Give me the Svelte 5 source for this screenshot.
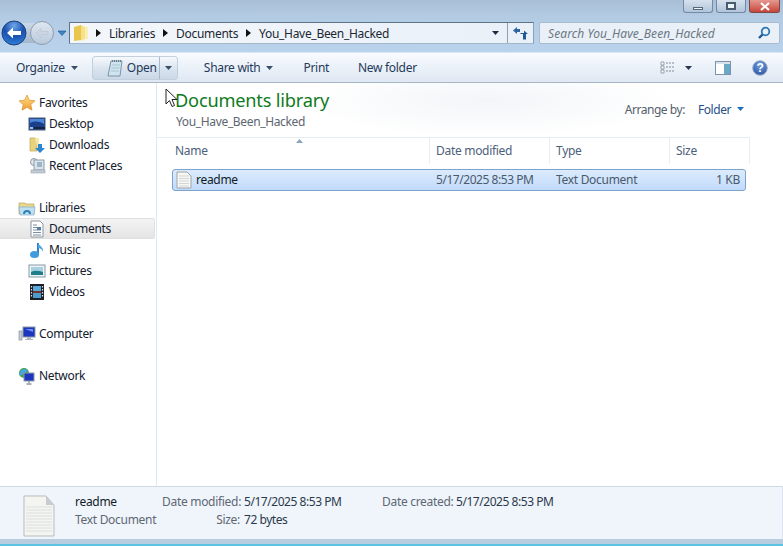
<script>
  const favs = [
    { id: 'desktop', label: 'Desktop' },
    { id: 'downloads', label: 'Downloads' },
    { id: 'recent', label: 'Recent Places' }
  ];
  const libs = [
    { id: 'documents', label: 'Documents', active: true },
    { id: 'music', label: 'Music' },
    { id: 'pictures', label: 'Pictures' },
    { id: 'videos', label: 'Videos' }
  ];
</script>

{#snippet caret(c = '#3a4f66')}
  <svg class="caret" width="7" height="4" viewBox="0 0 7 4"><path d="M0 0h7L3.500 4z" fill={c} /></svg>
{/snippet}

{#snippet sep()}
  <svg class="sep" width="5" height="8" viewBox="0 0 5 8"><path d="M0 0l5 4-5 4z" fill="#111" /></svg>
{/snippet}

{#snippet navIcon(id)}
  <svg class="nav-icon" width="18" height="18" viewBox="0 0 18 18">
    {#if id === 'star'}
      <defs><linearGradient id="st" x1="0" y1="0" x2="0" y2="1"><stop offset="0" stop-color="#fde28a" /><stop offset="1" stop-color="#f09a2e" /></linearGradient></defs>
      <path d="M9 1l2.400 5.200 5.600.6-4.200 3.800 1.200 5.600L9 13.300 4 16.200l1.200-5.600L1 6.800l5.600-.6z" fill="url(#st)" stroke="#d8912f" stroke-width=".7" />
    {:else if id === 'desktop'}
      <rect x="1" y="3" width="16" height="12" fill="#1c3f8c" stroke="#4a5c78" />
      <path d="M2 4h14v5C11 6 6 6 2 8z" fill="#4b86d8" />
      <rect x="6" y="12" width="11" height="2" fill="#15233f" />
      <rect x="2" y="12" width="3" height="2" fill="#9fc1e8" />
    {:else if id === 'downloads'}
      <path d="M2 2h5l2 1v12H2z" fill="#e9d27e" stroke="#c2a64e" stroke-width=".7" />
      <path d="M7 2h4v8H9z" fill="#f6e7a8" />
      <path d="M10 8h4v4h3l-5 5-5-5h3z" fill="#2f86d0" />
    {:else if id === 'recent'}
      <circle cx="6" cy="5" r="3.500" fill="#e6e9ec" stroke="#8b97a3" />
      <rect x="6" y="3" width="10" height="10" fill="#dbe4ec" stroke="#8f9ba8" />
      <rect x="9" y="5" width="5" height="5" fill="#9db5c9" />
      <rect x="3" y="13" width="14" height="3" fill="#c3ccd5" stroke="#98a3ae" stroke-width=".6" />
    {:else if id === 'libraries'}
      <path d="M1 4h6l1 1h8v10H1z" fill="#e8d98e" stroke="#b8a55c" stroke-width=".7" />
      <path d="M1 8h16l-1 8H2z" fill="#bfe0f2" stroke="#7aa4bd" stroke-width=".6" />
      <path d="M6 15c0-4 6-4 6 0" fill="none" stroke="#2f7fb8" stroke-width="2" />
    {:else if id === 'documents'}
      <path d="M3 1h9l3 3v13H3z" fill="#fff" stroke="#8b95a0" />
      <path d="M5 5h4M5 7.500h8M5 10h8M5 12.500h8M5 15h8" stroke="#7c8fa3" />
      <rect x="9" y="7" width="4" height="3" fill="#5b7da0" />
    {:else if id === 'music'}
      <path d="M10 2v11" stroke="#2f7fc8" stroke-width="2" fill="none" />
      <ellipse cx="6.500" cy="13.500" rx="4.500" ry="3.500" fill="#3f9bdc" />
      <path d="M10 1c0 4 6 4 5 10-1-3-3-4-5-4z" fill="#4ba6e2" />
    {:else if id === 'pictures'}
      <rect x="1" y="3" width="16" height="12" fill="#eef3f6" stroke="#8799a8" />
      <rect x="3" y="5" width="12" height="8" fill="#a8d0de" />
      <path d="M3 10c4-2 8-1 12 0v3H3z" fill="#1f7e8c" />
    {:else if id === 'videos'}
      <rect x="2" y="1" width="14" height="16" fill="#1b1f26" />
      <rect x="5" y="3" width="8" height="5" fill="#5ba7d8" />
      <rect x="5" y="10" width="8" height="5" fill="#4d9bcc" />
      <path d="M5 9h8" stroke="#b3423a" stroke-width="1.200" />
      <path d="M3.500 3v12M14.500 3v12" stroke="#dde" stroke-width="1.200" stroke-dasharray="1.500 1.500" />
    {:else if id === 'computer'}
      <rect x="1" y="6" width="3" height="9" fill="#c4cbd2" stroke="#7e8993" stroke-width=".6" />
      <rect x="5" y="2" width="12" height="10" fill="#1d36c0" stroke="#8b97a3" />
      <path d="M7 4h8v3z" fill="#6f90ea" />
      <path d="M9 12h4v2h2v1H7v-1h2z" fill="#aeb6bf" />
    {:else if id === 'network'}
      <circle cx="6" cy="6" r="5" fill="#3fa14a" />
      <path d="M3 3c3-2 6-1 7 1-2 0-2 3-5 3-1 1-2 2-4 1 0-2 1-4 2-5z" fill="#47a6dc" />
      <rect x="6" y="6" width="10" height="8" fill="#1d36c0" stroke="#8b97a3" />
      <path d="M11 14v2M8.500 17h5" stroke="#8d98a4" stroke-width="1.400" />
    {/if}
  </svg>
{/snippet}

<div class="window">
  <div class="chrome">
    <div class="caption">
      <div class="cap min"><span class="min-glyph"></span></div>
      <div class="cap max"><span class="max-glyph"></span></div>
      <div class="cap close">
        <svg width="12" height="9" viewBox="0 0 12 9"><path d="M2 1l8 7M10 1L2 8" stroke="#fff" stroke-width="2.200" /></svg>
      </div>
    </div>
    <div class="navrow">
      <div class="backfwd">
        <svg width="68" height="26" viewBox="0 0 68 26">
          <defs>
            <radialGradient id="bk" cx=".5" cy=".2" r=".85"><stop offset="0" stop-color="#6ea8ea" /><stop offset=".5" stop-color="#1a4fb0" /><stop offset="1" stop-color="#2f86dc" /></radialGradient>
            <linearGradient id="fw" x1="0" y1="0" x2="0" y2="1"><stop offset="0" stop-color="#dfe7f0" /><stop offset="1" stop-color="#b9c9db" /></linearGradient>
            <linearGradient id="rib" x1="0" y1="0" x2="0" y2="1"><stop offset="0" stop-color="#cbd8e6" /><stop offset="1" stop-color="#a3b7cc" /></linearGradient>
          </defs>
          <rect x="13" y="3" width="28" height="20" fill="url(#rib)" />
          <circle cx="41" cy="13" r="11.500" fill="url(#fw)" stroke="#8c9db2" />
          <path d="M35 13l5-4.500v3h7v3h-7v3z" fill="#cbd6e2" stroke="#b3c1d0" stroke-width=".5" />
          <circle cx="13" cy="13" r="12" fill="url(#bk)" stroke="#1d3f7a" />
          <path d="M6 13l6-5.500v3.500h8v4h-8v3.500z" fill="#fff" />
          <path d="M57 11h8l-4 4.500z" fill="#3b86c6" stroke="#1d4f86" stroke-width=".6" />
        </svg>
      </div>
      <div class="address">
        <svg class="addr-folder" width="16" height="18" viewBox="0 0 16 18">
          <path d="M1 3l7-2v15l-7 1z" fill="#e9c64f" />
          <path d="M8 1l4 2v12l-4 2z" fill="#f6e08a" />
          <path d="M12 3h3v12h-3z" fill="#fbeeb2" />
        </svg>
        <div class="crumbs">
          {@render sep()}<span>Libraries</span>
          {@render sep()}<span>Documents</span>
          {@render sep()}<span>You_Have_Been_Hacked</span>
        </div>
        <div class="addr-drop">{@render caret('#1c2c44')}</div>
        <div class="refresh">
          <svg width="15" height="13" viewBox="0 0 15 13">
            <path d="M0 3.500L4 0v2h3v3H4v2z" fill="#2f65a3" />
            <path d="M7.500 6h3.500V3.500L15 7h-2v5.500h-3V7H7.500z" fill="#1f5a98" />
          </svg>
        </div>
      </div>
      <div class="search">
        <span>Search You_Have_Been_Hacked</span>
        <svg width="14" height="14" viewBox="0 0 14 14">
          <circle cx="8.500" cy="5.500" r="3.800" fill="none" stroke="#2f75b5" stroke-width="1.800" />
          <path d="M5.500 8.500L2 12" stroke="#1d5795" stroke-width="2.400" />
        </svg>
      </div>
    </div>
  </div>

  <div class="toolbar">
    <div class="tool">Organize {@render caret()}</div>
    <div class="open">
      <div class="open-main">
        <svg width="16" height="18" viewBox="0 0 16 18">
          <path d="M4 2h11l-2 15H1z" fill="#cfe4ee" stroke="#7d94a6" />
          <path d="M5 2h9" stroke="#6b7f90" stroke-dasharray="1 1" stroke-width="2" />
          <path d="M5 6h8M4.500 9h8M4 12h8" stroke="#a8c3d3" />
        </svg>
        <span>Open</span>
      </div>
      <div class="open-drop">{@render caret()}</div>
    </div>
    <div class="tool share">Share with {@render caret()}</div>
    <div class="tool print">Print</div>
    <div class="tool newf">New folder</div>
    <div class="tool-right">
      <div class="views">
        <svg width="16" height="13" viewBox="0 0 16 13">
          <path d="M1 1h3v3H1zM1 5h3v3H1zM1 9h3v3H1z" fill="#fff" stroke="#7e8a97" stroke-width=".8" />
          <path d="M6 2h9M6 6h9M6 10h9" stroke="#7f8c9a" stroke-dasharray="2 1" />
        </svg>
        {@render caret('#26384f')}
      </div>
      <svg class="pane-ico" width="16" height="14" viewBox="0 0 16 14">
        <rect x=".5" y=".5" width="15" height="13" fill="#fff" stroke="#7a93a8" />
        <rect x="9" y="1" width="6" height="12" fill="#6aa8c8" />
        <rect x="1" y="1" width="14" height="2" fill="#d6e3ec" />
      </svg>
      <svg class="help" width="16" height="16" viewBox="0 0 16 16">
        <defs><radialGradient id="hp" cx=".5" cy=".3" r=".8"><stop offset="0" stop-color="#6f9ee0" /><stop offset="1" stop-color="#274d9e" /></radialGradient></defs>
        <circle cx="8" cy="8" r="7.300" fill="url(#hp)" stroke="#9db0c6" />
        <text x="8" y="12" text-anchor="middle" class="qm">?</text>
      </svg>
    </div>
  </div>

  <div class="body">
    <nav class="sidebar">
      <div class="group">
        <div class="row top">{@render navIcon('star')}<span>Favorites</span></div>
        {#each favs as f}
          <div class="row sub">{@render navIcon(f.id)}<span>{f.label}</span></div>
        {/each}
      </div>
      <div class="group">
        <div class="row top">{@render navIcon('libraries')}<span>Libraries</span></div>
        {#each libs as l}
          <div class="row sub" class:active={l.active}>{@render navIcon(l.id)}<span>{l.label}</span></div>
        {/each}
      </div>
      <div class="group">
        <div class="row top">{@render navIcon('computer')}<span>Computer</span></div>
      </div>
      <div class="group">
        <div class="row top">{@render navIcon('network')}<span>Network</span></div>
      </div>
    </nav>

    <main class="content">
      <header class="lib-head">
        <div class="lib-title">
          <h1>Documents library</h1>
          <p>You_Have_Been_Hacked</p>
        </div>
        <div class="arrange">
          <span class="arr-label">Arrange by:</span>
          <span class="arr-val">Folder {@render caret('#1f6fc0')}</span>
        </div>
      </header>
      <div class="columns">
        <div class="col c-name"><span>Name</span>
          <svg class="sort" width="7" height="4" viewBox="0 0 7 4"><path d="M0 4h7L3.500 0z" fill="#8aa4c0" /></svg>
        </div>
        <div class="col c-date"><span>Date modified</span></div>
        <div class="col c-type"><span>Type</span></div>
        <div class="col c-size"><span>Size</span></div>
      </div>
      <div class="file">
        <div class="f-name">
          <svg width="16" height="18" viewBox="0 0 16 18">
            <path d="M1 1h10l4 4v12H1z" fill="#f6f6f2" stroke="#a0a4a8" />
            <path d="M3 5h10M3 7.500h10M3 10h10M3 12.500h10M3 15h10" stroke="#d3d6d8" />
          </svg>
          <span>readme</span>
        </div>
        <div class="f-date">5/17/2025 8:53 PM</div>
        <div class="f-type">Text Document</div>
        <div class="f-size">1 KB</div>
      </div>
      <svg class="cursor" width="14" height="20" viewBox="0 0 14 20">
        <path d="M1 1v15l3.500-3.500 2.500 6 2.500-1-2.500-6h5z" fill="#fff" stroke="#222" stroke-width="1" />
      </svg>
    </main>
  </div>

  <footer class="details">
    <svg class="big-doc" width="32" height="42" viewBox="0 0 32 42">
      <path d="M1 1h22l8 9v31H1z" fill="#f4f4f0" stroke="#b9bcc0" />
      <path d="M23 1v9h8z" fill="#c9ccce" />
      <path d="M3 12h26M3 15h26M3 18h26M3 21h26M3 24h26M3 27h26M3 30h26M3 33h26M3 36h26" stroke="#dcdfe2" />
    </svg>
    <div class="d-name">
      <div class="d-title">readme</div>
      <div class="d-sub">Text Document</div>
    </div>
    <div class="d-grid">
      <span class="k">Date modified:</span><span class="v">5/17/2025 8:53 PM</span>
      <span class="k">Size:</span><span class="v">72 bytes</span>
    </div>
    <div class="d-grid second">
      <span class="k">Date created:</span><span class="v">5/17/2025 8:53 PM</span>
    </div>
  </footer>
  <div class="edge"></div>
</div>

<style>
  :global(body) {
    margin: 0;
    background: #fff;
  }
  .window {
    width: 783px;
    height: 546px;
    display: flex;
    flex-direction: column;
    overflow: hidden;
    font-family: 'Noto Sans', 'Open Sans', sans-serif;
    font-size: 12px;
    letter-spacing: -0.3px;
    color: #1a2a3c;
    white-space: nowrap;
  }
  .chrome {
    height: 52px;
    flex: none;
    background: linear-gradient(#a9bfd8 0, #b3cae3 30%, #bad3ec 100%);
    display: flex;
    flex-direction: column;
  }
  .caption {
    display: flex;
    justify-content: flex-end;
    gap: 3px;
    padding-right: 3px;
    height: 14px;
    flex: none;
  }
  .cap {
    height: 13px;
    width: 30px;
    display: flex;
    align-items: center;
    justify-content: center;
    background: linear-gradient(#d6e1ed, #b2c5da);
    border: 1px solid #728aa4;
    border-top: 0;
    border-radius: 0 0 3px 3px;
    box-sizing: border-box;
  }
  .close {
    width: 31px;
    background: linear-gradient(#e5998f, #c8453a);
    border-color: #7a4a4a;
  }
  .min-glyph {
    width: 10px;
    height: 3px;
    background: #eef3f8;
    border: 1px solid #56687c;
    margin-top: 4px;
    box-sizing: border-box;
  }
  .max-glyph {
    width: 10px;
    height: 8px;
    border: 2px solid #4a5c70;
    box-sizing: border-box;
    background: #eef3f8;
  }
  .navrow {
    display: flex;
    margin-top: 6px;
    padding-right: 3px;
    padding-left: 1px;
    align-items: center;
    height: 26px;
  }
  .backfwd {
    width: 68px;
    height: 26px;
    flex: none;
  }
  .backfwd svg {
    display: block;
  }
  .address {
    width: 465px;
    height: 22px;
    box-sizing: border-box;
    flex: none;
    display: flex;
    align-items: center;
    background: linear-gradient(90deg, #f3f7fb, #e9f0f8);
    border: 1px solid #5f7387;
    border-right-color: #8aa1b8;
    border-bottom-color: #a4b7ca;
    padding-left: 3px;
    margin-right: 5px;
    font-size: 12px;
    color: #1c2733;
  }
  .addr-folder {
    flex: none;
    margin-right: 4px;
  }
  .crumbs {
    display: flex;
    align-items: center;
    flex: 1;
  }
  .sep {
    margin: 0 8px 0 8px;
    flex: none;
  }
  .crumbs .sep:first-child {
    margin-left: 3px;
  }
  .addr-drop {
    width: 24px;
    display: flex;
    align-items: center;
    justify-content: center;
  }
  .refresh {
    width: 25px;
    height: 20px;
    display: flex;
    align-items: center;
    justify-content: center;
    border-left: 1px solid #8ea2b6;
  }
  .search {
    flex: 1;
    height: 22px;
    box-sizing: border-box;
    background: #e9f0f8;
    border: 1px solid #a9bdd1;
    border-radius: 2px;
    display: flex;
    align-items: center;
    justify-content: space-between;
    padding: 0 8px;
    color: #6d7883;
    font-style: italic;
    letter-spacing: 0.1px;
  }
  .caret {
    flex: none;
    display: inline-block;
  }
  .toolbar {
    height: 31px;
    flex: none;
    box-sizing: border-box;
    display: flex;
    align-items: center;
    background: linear-gradient(#f9fbfe, #e9f0f8 55%, #dfe8f3);
    border-top: 1px solid #dbe7f3;
    border-bottom: 1px solid #a7b6c6;
    padding-left: 16px;
    color: #1f3a5a;
  }
  .tool {
    display: flex;
    align-items: center;
    gap: 6px;
  }
  .open {
    margin-left: 14px;
    width: 86px;
    height: 24px;
    box-sizing: border-box;
    display: flex;
    border: 1px solid #c2cfdd;
    border-radius: 3px;
    background: linear-gradient(#f6f9fc, #d8e3ef 55%, #cad8e7);
  }
  .open-main {
    flex: 1;
    display: flex;
    align-items: center;
    padding-left: 14px;
    gap: 4px;
    border-right: 1px solid #a8b9cb;
  }
  .open-drop {
    width: 17px;
    display: flex;
    align-items: center;
    justify-content: center;
  }
  .share {
    margin-left: 26px;
  }
  .print {
    margin-left: 30px;
  }
  .newf {
    margin-left: 29px;
  }
  .tool-right {
    margin-left: auto;
    display: flex;
    align-items: center;
    padding-right: 15px;
  }
  .views {
    display: flex;
    align-items: center;
    gap: 9px;
  }
  .pane-ico {
    margin-left: 23px;
  }
  .help {
    margin-left: 21px;
  }
  .qm {
    font: bold 12px 'Liberation Sans', sans-serif;
    fill: #fff;
  }
  .body {
    flex: 1;
    display: flex;
    min-height: 0;
    background: #fff;
  }
  .sidebar {
    width: 157px;
    flex: none;
    box-sizing: border-box;
    border-right: 1px solid #dfe8f1;
    padding-top: 9px;
    color: #13202e;
    display: flex;
    flex-direction: column;
    gap: 21px;
  }
  .row {
    height: 21px;
    display: flex;
    align-items: center;
    gap: 3px;
    box-sizing: border-box;
  }
  .top {
    padding-left: 18px;
  }
  .sub {
    padding-left: 28px;
  }
  .active {
    background: linear-gradient(#f4f4f4, #e4e4e4);
    border: 1px solid #e0e0e0;
    border-left: 0;
    border-radius: 0 2px 2px 0;
    margin-right: 1px;
  }
  .nav-icon {
    flex: none;
  }
  .content {
    flex: 1;
    position: relative;
    padding-top: 5px;
    box-sizing: border-box;
    background:
      radial-gradient(ellipse 190px 36px at 330px 18px, #f3f5f8 0, #fff 100%);
  }
  .lib-head {
    display: flex;
    justify-content: space-between;
    height: 49px;
    padding: 0 39px 0 18px;
    box-sizing: border-box;
  }
  .lib-title h1 {
    margin: 0;
    font-size: 18.2px;
    font-weight: 400;
    line-height: 24px;
    color: #0f7a22;
    letter-spacing: -0.2px;
  }
  .lib-title p {
    margin: 2px 0 0 1px;
    font-size: 12px;
    line-height: 16px;
    letter-spacing: -0.35px;
    color: #5d666f;
  }
  .arrange {
    display: flex;
    align-items: center;
    gap: 13px;
    height: 42px;
  }
  .arr-label {
    color: #55606b;
    letter-spacing: -0.45px;
  }
  .arr-val {
    display: flex;
    align-items: center;
    gap: 6px;
    color: #1f4f86;
    letter-spacing: -0.45px;
  }
  .columns {
    position: relative;
    display: flex;
    height: 27px;
    width: 593px;
    margin-bottom: 5px;
    box-sizing: border-box;
    border-top: 1px solid #e4ecf3;
    color: #4c607a;
  }
  .col {
    box-sizing: border-box;
    display: flex;
    align-items: center;
    padding: 0 6px 2px;
    border-right: 1px solid #e8eef4;
    position: relative;
  }
  .c-name {
    width: 273px;
    padding-left: 18px;
  }
  .c-date,
  .c-type,
  .c-size {
    width: 120px;
  }
  .c-size {
    width: 80px;
  }
  .sort {
    position: absolute;
    left: 139px;
    top: 1px;
  }
  .file {
    margin-left: 15px;
    width: 574px;
    height: 22px;
    box-sizing: border-box;
    display: flex;
    align-items: center;
    background: linear-gradient(#dcebfc, #c1dbfc);
    border: 1px solid #7da2ce;
    border-radius: 3px;
    color: #4a5a6c;
    padding-bottom: 1px;
  }
  .f-name {
    width: 263px;
    padding-left: 3px;
    box-sizing: border-box;
    display: flex;
    align-items: center;
    gap: 4px;
    color: #111c28;
  }
  .f-date {
    width: 120px;
    letter-spacing: -0.45px;
  }
  .f-type {
    width: 120px;
  }
  .f-size {
    flex: 1;
    text-align: right;
    padding-right: 5px;
  }
  .cursor {
    position: absolute;
    left: 8px;
    top: 5px;
  }
  .details {
    height: 53px;
    flex: none;
    box-sizing: border-box;
    display: flex;
    background: #f0f4fb;
    border-top: 1px solid #cfd9e5;
    border-right: 1px solid #dbe4ef;
    padding-left: 23px;
    line-height: 18px;
    color: #2a3a4c;
  }
  .big-doc {
    margin-top: 8px;
    flex: none;
  }
  .d-name {
    margin-left: 20px;
    padding-top: 6px;
    width: 87px;
    flex: none;
  }
  .d-title {
    color: #111c28;
  }
  .d-sub {
    color: #5d6873;
  }
  .d-grid {
    display: grid;
    grid-template-columns: 78px auto;
    column-gap: 4px;
    padding-top: 6px;
    height: fit-content;
    width: 220px;
    flex: none;
  }
  .second {
    grid-template-columns: 70px auto;
  }
  .k {
    text-align: right;
    color: #5d6873;
  }
  .v {
    letter-spacing: -0.45px;
  }
  .edge {
    height: 7px;
    flex: none;
    background: linear-gradient(#bacce0 0, #bacce0 70%, #5cc3e3 71%, #5cc3e3 100%);
  }
</style>
